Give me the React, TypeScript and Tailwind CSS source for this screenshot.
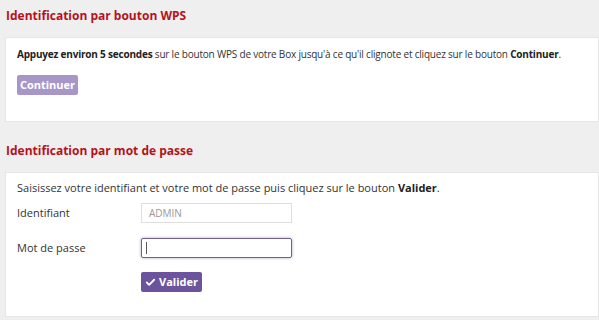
import { Check } from "lucide-react";

const font = { fontFamily: '"Open Sans", "Noto Sans", sans-serif' };

const App = () => {
  return (
    <div className="w-[599px] h-[320px] bg-[#efefef] overflow-hidden text-[11px] text-[#333]" style={font}>
      <h2 className="pl-[6px] pt-[8px] h-[37px] text-[12px] font-bold text-[#b5121b] leading-[16px]">
        Identification par bouton WPS
      </h2>
      <div className="ml-[5px] bg-white border border-[#e6e6e6] h-[85px] pl-[11px] pt-[8px]">
        <p className="leading-[16px] text-[10px] tracking-[-0.2px]">
          <b className="text-[#222]">Appuyez environ 5 secondes</b> sur le bouton WPS de votre Box jusqu'à ce qu'il clignote et cliquez sur le bouton <b className="text-[#222]">Continuer</b>.
        </p>
        <button className="mt-[13px] h-[20px] w-[61px] rounded-[2px] bg-[#a797c8] text-white font-bold text-[11px] leading-[20px]">
          Continuer
        </button>
      </div>
      <h2 className="pl-[6px] pt-[21px] h-[50px] text-[12px] font-bold text-[#b5121b] leading-[16px]">
        Identification par mot de passe
      </h2>
      <div className="ml-[5px] bg-white border border-[#e6e6e6] h-[145px] pl-[11px] pt-[7px]">
        <p className="leading-[16px]">
          Saisissez votre identifiant et votre mot de passe puis cliquez sur le bouton <b className="text-[#222]">Valider</b>.
        </p>
        <div className="mt-[7px] flex items-center">
          <label className="w-[124px]">Identifiant</label>
          <div className="w-[151px] h-[20px] border border-[#dedede] px-[7px] leading-[18px] text-[#999] text-[10px]">ADMIN</div>
        </div>
        <div className="mt-[15px] flex items-center">
          <label className="w-[124px]">Mot de passe</label>
          <div className="w-[151px] h-[20px] border border-[#6f6290] rounded-[2px] shadow-[0_0_3px_rgba(90,70,140,0.5)] px-[4px] flex items-center">
            <span className="w-px h-[12px] bg-[#555]" />
          </div>
        </div>
        <button className="ml-[124px] mt-[14px] h-[20px] w-[61px] rounded-[2px] bg-[#6c539e] text-white font-bold text-[11px] flex items-center justify-center gap-[3px]">
          <Check size={11} strokeWidth={4} />
          Valider
        </button>
      </div>
    </div>
  );
};

export default App;
